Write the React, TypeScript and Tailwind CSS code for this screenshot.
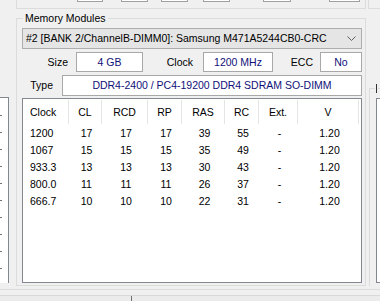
import React from "react";

const rows: string[][] = [
  ["1200", "17", "17", "17", "39", "55", "-", "1.20"],
  ["1067", "15", "15", "15", "35", "49", "-", "1.20"],
  ["933.3", "13", "13", "13", "30", "43", "-", "1.20"],
  ["800.0", "11", "11", "11", "26", "37", "-", "1.20"],
  ["666.7", "10", "10", "10", "22", "31", "-", "1.20"],
];

const cols = [
  { h: "Clock", w: "w-[46px] justify-start pl-[7px]" },
  { h: "CL", w: "w-[33px] justify-center" },
  { h: "RCD", w: "w-[46px] justify-center" },
  { h: "RP", w: "w-[34px] justify-center" },
  { h: "RAS", w: "w-[43px] justify-center" },
  { h: "RC", w: "w-[34px] justify-center" },
  { h: "Ext.", w: "w-[39px] justify-center" },
  { h: "V", w: "w-[61px] justify-center" },
];

export default function App() {
  return (
    <div className="w-[380px] h-[301px] bg-[#f0f0f0] overflow-hidden flex flex-col font-['Liberation_Sans',Arial,sans-serif] text-[10.5px] leading-none text-black">
      <div className="h-[286px] flex flex-row">
        {/* left list panel */}
        <div className="w-[9px] flex flex-col">
          <div className="h-[97px]" />
          <div className="h-[186px] bg-white border-t border-r border-[#828790] flex flex-col pt-[9px]">
            {Array.from({ length: 10 }).map((_, i) => (
              <div key={i} className="h-[17px] flex items-center">
                <div className="w-[2px] h-[1px] bg-[#707070]" />
              </div>
            ))}
          </div>
        </div>
        <div className="w-[7px]" />
        {/* main column */}
        <div className="w-[350px] flex flex-col">
          <div className="h-[9px] border-x border-b border-[#dcdcdc] flex flex-row items-start">
            <div className="ml-[60px] w-[26px] h-[2px] border-x border-b border-[#a0a0a0] bg-white" />
            <div className="ml-[18px] w-[27px] h-[2px] border-x border-b border-[#a0a0a0] bg-white" />
            <div className="ml-[13px] w-[27px] h-[2px] border-x border-b border-[#a0a0a0] bg-white" />
            <div className="ml-[15px] w-[27px] h-[2px] border-x border-b border-[#a0a0a0] bg-white" />
            <div className="ml-[33px] w-[28px] h-[2px] border-x border-b border-[#a0a0a0] bg-white" />
            <div className="ml-[38px] w-[31px] h-[2px] border-x border-b border-[#a0a0a0] bg-white" />
          </div>
          <div className="h-[9px]" />
          <div className="relative h-[268px] border border-[#dcdcdc] pt-[9px] pl-[5px] pr-[3px] flex flex-col">
            <div className="absolute left-[6px] top-[-6px] px-[2px] bg-[#f0f0f0] text-[10.5px] text-black">
              Memory Modules
            </div>
            {/* combobox */}
            <div className="h-[21px] bg-[#e5e5e5] border border-[#adadad] flex flex-row items-center pl-[3px] pr-[4px]">
              <span className="flex-1 text-black whitespace-nowrap">
                #2 [BANK 2/ChannelB-DIMM0]: Samsung M471A5244CB0-CRC
              </span>
              <svg width="9" height="5" viewBox="0 0 9 5" className="mr-[1px]">
                <path d="M0.5 0.5 L4.5 4.5 L8.5 0.5" fill="none" stroke="#606060" strokeWidth="1" />
              </svg>
            </div>
            {/* size / clock / ecc */}
            <div className="mt-[3px] h-[20px] flex flex-row">
              <div className="w-[54px] flex items-center justify-end pr-[8px] text-black">Size</div>
              <div className="w-[67px] bg-white border border-[#a8a8a8] flex items-center justify-center text-[#10107a]">4 GB</div>
              <div className="w-[60px] flex items-center justify-end pr-[10px] text-black">Clock</div>
              <div className="w-[70px] bg-white border border-[#a8a8a8] flex items-center justify-center text-[#10107a]">1200 MHz</div>
              <div className="w-[47px] flex items-center justify-end pr-[7px] text-black">ECC</div>
              <div className="flex-1 bg-white border border-[#a8a8a8] flex items-center justify-center text-[#10107a]">No</div>
            </div>
            {/* type */}
            <div className="mt-[3px] h-[21px] flex flex-row">
              <div className="w-[40px] flex items-center justify-end pr-[9px] text-black">Type</div>
              <div className="flex-1 bg-white border border-[#a8a8a8] flex items-center justify-center text-[#10107a]">
                DDR4-2400 / PC4-19200 DDR4 SDRAM SO-DIMM
              </div>
            </div>
            {/* table */}
            <div className="mt-[2px] h-[185px] bg-white border border-[#828790] flex flex-col">
              <div className="h-[26px] flex flex-row">
                {cols.map((c) => (
                  <div key={c.h} className={`${c.w} flex items-center border-r border-[#e5e5e5] my-[1px] text-black`}>
                    {c.h}
                  </div>
                ))}
              </div>
              {rows.map((r, i) => (
                <div key={i} className="h-[17px] flex flex-row">
                  {r.map((v, j) => (
                    <div key={j} className={`${cols[j].w} flex items-center text-black`}>
                      <span className={j === 0 ? "" : "pl-[2px]"}>{v}</span>
                    </div>
                  ))}
                </div>
              ))}
            </div>
          </div>
        </div>
        {/* right column */}
        <div className="w-[14px] flex flex-col">
          <div className="h-[9px] ml-[2px] border-l border-b border-[#dcdcdc]" />
          <div className="h-[79px]" />
          <div className="relative h-[198px] ml-[3px] border-l border-t border-[#dcdcdc] pt-[9px] pl-[6px] flex flex-col">
            <div className="absolute left-[5px] top-[-5px] w-[3px] h-[9px] bg-[#f0f0f0] flex justify-center">
              <div className="w-[1px] h-[9px] bg-[#303030]" />
            </div>
            <div className="h-[185px] bg-white border-l border-t border-b border-[#828790]" />
          </div>
        </div>
      </div>
      <div className="h-[4px] border-b border-[#dcdcdc]" />
      <div className="h-[5px]" />
      <div className="flex-1 bg-[#ebebeb] border-t border-[#d8d8d8] flex flex-row">
        <div className="w-[132px] border-r border-[#6f6f6f]" />
      </div>
    </div>
  );
}
